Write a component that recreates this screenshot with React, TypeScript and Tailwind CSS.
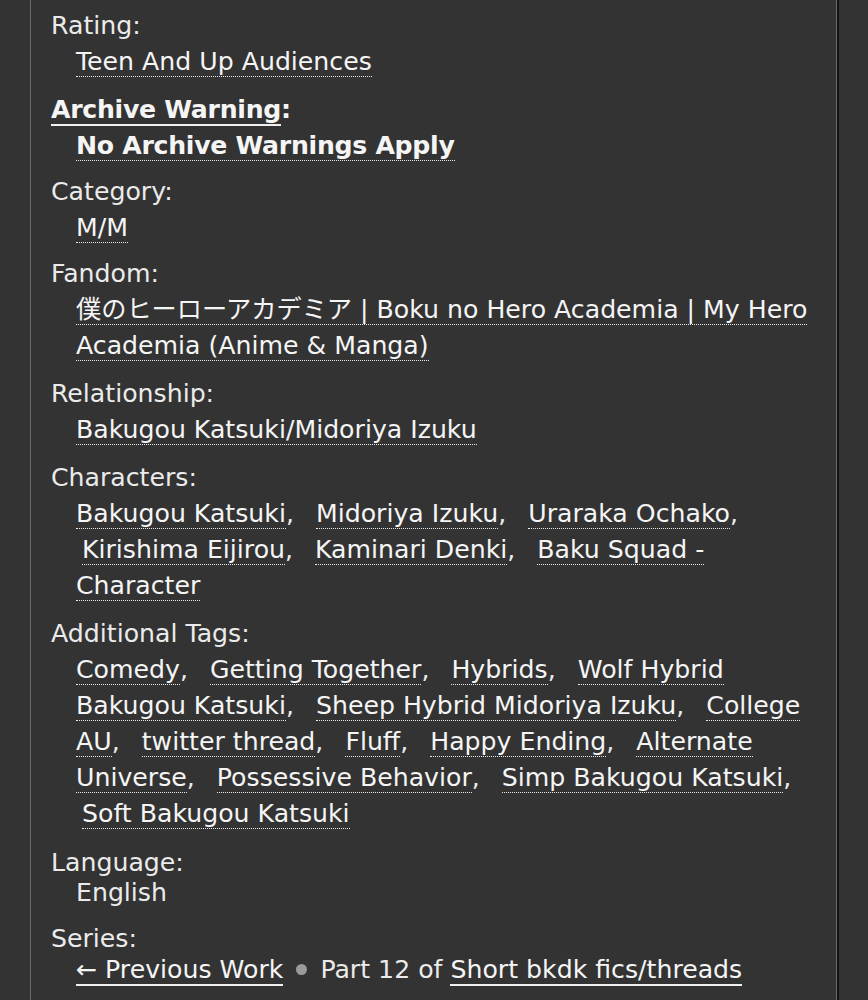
import React, { Fragment } from "react";

function Tag({ children, first, bold }: { children: React.ReactNode; first?: boolean; bold?: boolean }) {
  return (
    <a
      className={`${first ? "" : "ml-[6px]"} ${bold ? "font-bold tracking-[-0.3px]" : ""} border-b border-dotted border-[#ececec] text-[#f5f5f5]`}
    >
      {children}
    </a>
  );
}

function TagList({ items, bold }: { items: string[]; bold?: boolean }) {
  return (
    <dd className="ml-[25px] pt-[3px] leading-[36px]">
      {items.map((t, i) => (
        <Fragment key={i}>
          {i > 0 && ",\u00a0 "}
          <Tag first={i === 0} bold={bold}>
            {t}
          </Tag>
        </Fragment>
      ))}
    </dd>
  );
}

function Label({ children, mt }: { children: React.ReactNode; mt: string }) {
  return <dt className={`${mt} leading-[30px]`}>{children}</dt>;
}

export default function App() {
  return (
    <div className="min-h-screen bg-[#333333] font-['DejaVu_Sans','Noto_Sans_CJK_JP',sans-serif] text-[25.2px] text-[#ebebeb]">
      <div className="ml-[30px] w-[807px] min-h-screen border-l border-r border-[#6a6a6a] shadow-[2px_0_0_#141414] pl-[20px] pr-[16px] pt-[11px]">
        <dl>
          <Label mt="mt-0">Rating:</Label>
          <TagList items={["Teen And Up Audiences"]} />

          <dt className="mt-[15px] leading-[30px] font-bold tracking-[-0.3px] text-[#f5f5f5]">
            <a className="border-b-2 border-[#f0f0f0]">Archive Warning</a>:
          </dt>
          <TagList items={["No Archive Warnings Apply"]} bold />

          <Label mt="mt-[13px]">Category:</Label>
          <TagList items={["M/M"]} />

          <Label mt="mt-[13px]">Fandom:</Label>
          <TagList items={["僕のヒーローアカデミア | Boku no Hero Academia | My Hero Academia (Anime & Manga)"]} />

          <Label mt="mt-[15px]">Relationship:</Label>
          <TagList items={["Bakugou Katsuki/Midoriya Izuku"]} />

          <Label mt="mt-[15px]">Characters:</Label>
          <TagList
            items={[
              "Bakugou Katsuki",
              "Midoriya Izuku",
              "Uraraka Ochako",
              "Kirishima Eijirou",
              "Kaminari Denki",
              "Baku Squad - Character",
            ]}
          />

          <Label mt="mt-[15px]">Additional Tags:</Label>
          <TagList
            items={[
              "Comedy",
              "Getting Together",
              "Hybrids",
              "Wolf Hybrid Bakugou Katsuki",
              "Sheep Hybrid Midoriya Izuku",
              "College AU",
              "twitter thread",
              "Fluff",
              "Happy Ending",
              "Alternate Universe",
              "Possessive Behavior",
              "Simp Bakugou Katsuki",
              "Soft Bakugou Katsuki",
            ]}
          />

          <Label mt="mt-[16px]">Language:</Label>
          <dd className="ml-[25px] leading-[30px]">English</dd>

          <Label mt="mt-[16px]">Series:</Label>
          <dd className="ml-[25px] leading-[31px]">
            <a className="border-b-2 border-[#f0f0f0] text-[#f5f5f5]">← Previous Work</a>{" "}
            <span className="mx-[5px] inline-block h-[11px] w-[11px] rounded-full bg-[#9a9a9a] align-[3px]"></span>{" "}
            Part 12 of{" "}
            <a className="border-b-2 border-[#f0f0f0] text-[#f5f5f5]">Short bkdk fics/threads</a>
          </dd>
        </dl>
      </div>
    </div>
  );
}
